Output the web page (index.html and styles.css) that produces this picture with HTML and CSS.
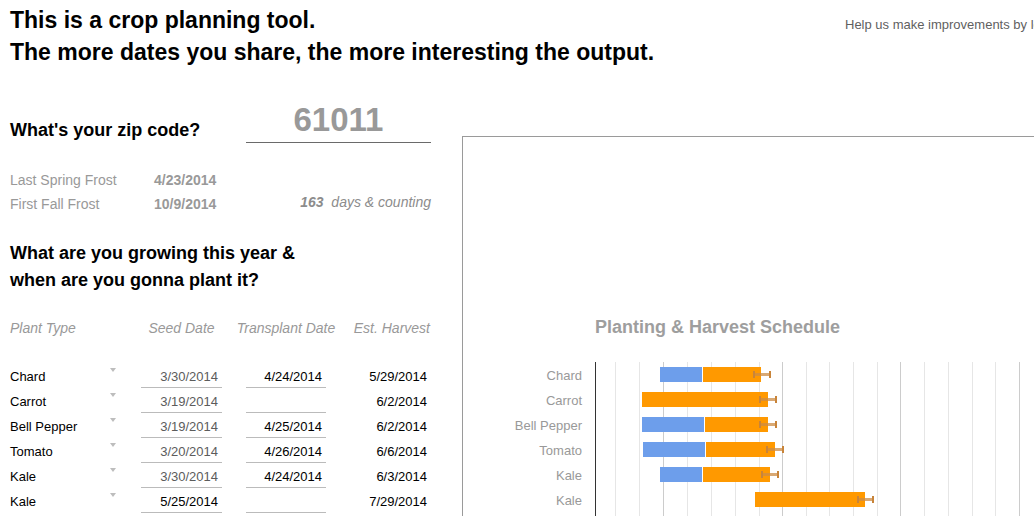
FILE: index.html
```html
<!DOCTYPE html>
<html>
<head>
<meta charset="utf-8">
<title>Crop planning tool</title>
<link rel="stylesheet" href="styles.css">
</head>
<body>
<div class="page">
  <header class="top">
    <div class="intro">
      <h1>This is a crop planning tool.</h1>
      <h1>The more dates you share, the more interesting the output.</h1>
    </div>
    <div class="help">Help us make improvements by letting us know what you think</div>
  </header>

  <div class="main">
    <section class="left">
      <div class="zip-row">
        <h2 class="q">What's your zip code?</h2>
        <div class="zip-value">61011</div>
      </div>

      <div class="frost">
        <span class="f-label">Last Spring Frost</span>
        <span class="f-date">4/23/2014</span>
        <span></span>
        <span class="f-label">First Fall Frost</span>
        <span class="f-date">10/9/2014</span>
        <span class="count"><b>163</b>&nbsp; days &amp; counting</span>
      </div>

      <h2 class="q q2">What are you growing this year &amp;<br>when are you gonna plant it?</h2>

      <div class="plants-head">
        <span>Plant Type</span>
        <span></span>
        <span class="c">Seed Date</span>
        <span></span>
        <span class="c">Transplant Date</span>
        <span class="r">Est. Harvest</span>
      </div>

      <div class="plant-row">
        <span class="name">Chard</span><span class="arrow-cell"><i class="arrow"></i></span>
        <span class="date seed">3/30/2014</span><span></span>
        <span class="date">4/24/2014</span><span class="harvest">5/29/2014</span>
      </div>
      <div class="plant-row">
        <span class="name">Carrot</span><span class="arrow-cell"><i class="arrow"></i></span>
        <span class="date seed">3/19/2014</span><span></span>
        <span class="date"></span><span class="harvest">6/2/2014</span>
      </div>
      <div class="plant-row">
        <span class="name">Bell Pepper</span><span class="arrow-cell"><i class="arrow"></i></span>
        <span class="date seed">3/19/2014</span><span></span>
        <span class="date">4/25/2014</span><span class="harvest">6/2/2014</span>
      </div>
      <div class="plant-row">
        <span class="name">Tomato</span><span class="arrow-cell"><i class="arrow"></i></span>
        <span class="date seed">3/20/2014</span><span></span>
        <span class="date">4/26/2014</span><span class="harvest">6/6/2014</span>
      </div>
      <div class="plant-row">
        <span class="name">Kale</span><span class="arrow-cell"><i class="arrow"></i></span>
        <span class="date seed">3/30/2014</span><span></span>
        <span class="date">4/24/2014</span><span class="harvest">6/3/2014</span>
      </div>
      <div class="plant-row">
        <span class="name">Kale</span><span class="arrow-cell"><i class="arrow"></i></span>
        <span class="date">5/25/2014</span><span></span>
        <span class="date"></span><span class="harvest">7/29/2014</span>
      </div>
    </section>

    <section class="chart">
      <div class="chart-title">Planting &amp; Harvest Schedule</div>
      <div class="chart-body">
        <div class="labels">
          <div>Chard</div>
          <div>Carrot</div>
          <div>Bell Pepper</div>
          <div>Tomato</div>
          <div>Kale</div>
          <div>Kale</div>
        </div>
        <div class="plot">
          <i class="gl" style="left:19px"></i>
          <i class="gl" style="left:43px"></i>
          <i class="gl major" style="left:67px"></i>
          <i class="gl" style="left:91px"></i>
          <i class="gl" style="left:115px"></i>
          <i class="gl" style="left:139px"></i>
          <i class="gl" style="left:163px"></i>
          <i class="gl major" style="left:186px"></i>
          <i class="gl" style="left:210px"></i>
          <i class="gl" style="left:233px"></i>
          <i class="gl" style="left:257px"></i>
          <i class="gl" style="left:281px"></i>
          <i class="gl major" style="left:304px"></i>
          <i class="gl" style="left:328px"></i>
          <i class="gl" style="left:352px"></i>
          <i class="gl" style="left:376px"></i>
          <i class="gl" style="left:399px"></i>
          <i class="gl major" style="left:423px"></i>

          <div class="bar-row">
            <i class="bar seed-bar" style="left:64px;width:42px"></i>
            <i class="bar grow-bar" style="left:107px;width:58px"></i>
            <i class="err" style="left:157px;width:18px"></i>
          </div>
          <div class="bar-row">
            <i class="bar grow-bar" style="left:46px;width:126px"></i>
            <i class="err" style="left:163px;width:18px"></i>
          </div>
          <div class="bar-row">
            <i class="bar seed-bar" style="left:46px;width:62px"></i>
            <i class="bar grow-bar" style="left:109px;width:63px"></i>
            <i class="err" style="left:163px;width:18px"></i>
          </div>
          <div class="bar-row">
            <i class="bar seed-bar" style="left:47px;width:62px"></i>
            <i class="bar grow-bar" style="left:110px;width:69px"></i>
            <i class="err" style="left:170px;width:18px"></i>
          </div>
          <div class="bar-row">
            <i class="bar seed-bar" style="left:64px;width:42px"></i>
            <i class="bar grow-bar" style="left:107px;width:67px"></i>
            <i class="err" style="left:165px;width:18px"></i>
          </div>
          <div class="bar-row">
            <i class="bar grow-bar" style="left:159px;width:110px"></i>
            <i class="err" style="left:261px;width:17px"></i>
          </div>
        </div>
      </div>
    </section>
  </div>
</div>
</body>
</html>
```

FILE: styles.css
```css
html, body {
  margin: 0;
  padding: 0;
  background: #fff;
  overflow: hidden;
}

body {
  font-family: "Liberation Sans", Arial, sans-serif;
  color: #000;
  width: 1034px;
  height: 516px;
}

.page {
  width: 1034px;
}

/* ---------- top ---------- */
.top {
  display: flex;
  align-items: flex-start;
}

.intro {
  flex: 0 0 845px;
  box-sizing: border-box;
  padding: 4px 0 0 10px;
}

.intro h1 {
  margin: 0;
  font-size: 23px;
  line-height: 32px;
  font-weight: bold;
  white-space: nowrap;
}

.help {
  padding-top: 17px;
  font-size: 13px;
  line-height: 16px;
  color: #5f5f5f;
  white-space: nowrap;
}

/* ---------- main ---------- */
.main {
  display: flex;
  align-items: flex-start;
}

.left {
  flex: 0 0 431px;
  box-sizing: border-box;
  padding-left: 10px;
}

.q {
  margin: 0;
  font-size: 18px;
  font-weight: bold;
  line-height: 20px;
}

.zip-row {
  margin-top: 33px;
  display: flex;
  justify-content: space-between;
  align-items: flex-end;
}

.zip-row .q {
  margin-bottom: 3px;
}

.zip-value {
  width: 185px;
  text-align: center;
  font-size: 33px;
  font-weight: bold;
  line-height: 38px;
  padding-bottom: 3px;
  color: #999;
  border-bottom: 1px solid #6a6a6a;
}

.frost {
  margin-top: 25px;
  display: grid;
  grid-template-columns: 144px 1fr auto;
  font-size: 14px;
  line-height: 24px;
  color: #999;
}

.f-date {
  font-weight: bold;
}

.count {
  font-style: italic;
  color: #8c8c8c;
  position: relative;
  top: -2px;
}

.count b {
  font-weight: bold;
}

.q2 {
  margin-top: 24px;
  line-height: 27px;
}

.plants-head,
.plant-row {
  display: grid;
  grid-template-columns: 100px 31px 81px 24px 80px 105px;
}

.plants-head {
  margin-top: 24px;
  margin-bottom: 25px;
  font-size: 14px;
  font-style: italic;
  line-height: 20px;
  color: #999;
}

.plants-head .c {
  display: flex;
  justify-content: center;
  white-space: nowrap;
}

.plants-head .r {
  text-align: right;
  padding-right: 1px;
  white-space: nowrap;
}

.plant-row {
  height: 25px;
  font-size: 13px;
  align-items: start;
}

.name {
  padding-top: 3px;
  line-height: 21px;
  white-space: nowrap;
}

.arrow-cell {
  padding-top: 5px;
  line-height: 0;
}

.arrow {
  display: inline-block;
  width: 0;
  height: 0;
  border-left: 3px solid transparent;
  border-right: 3px solid transparent;
  border-top: 4px solid #bdbdbd;
}

.date {
  height: 21px;
  padding: 3px 4px 0 0;
  line-height: 21px;
  text-align: right;
  border-bottom: 1px solid #bbb;
  color: #000;
}

.date.seed {
  color: #5c5c5c;
}

.harvest {
  padding: 3px 4px 0 0;
  line-height: 21px;
  text-align: right;
}

/* ---------- chart ---------- */
.chart {
  flex: 0 0 620px;
  height: 420px;
  margin-left: 31px;
  margin-top: 68px;
  border-top: 1px solid #9a9a9a;
  border-left: 1px solid #9a9a9a;
  padding-top: 178px;
  box-sizing: border-box;
}

.chart-title {
  padding-left: 132px;
  font-size: 18px;
  font-weight: bold;
  line-height: 24px;
  color: #9e9e9e;
  white-space: nowrap;
}

.chart-body {
  margin-top: 23px;
  display: grid;
  grid-template-columns: 120px 1fr;
  column-gap: 12px;
}

.labels div {
  height: 25px;
  padding-top: 1px;
  box-sizing: border-box;
  line-height: 25px;
  font-size: 13px;
  color: #999;
  text-align: right;
  padding-right: 1px;
  white-space: nowrap;
}

.plot {
  position: relative;
  height: 200px;
  border-left: 1px solid #333;
}

.gl {
  position: absolute;
  top: 0;
  bottom: 0;
  width: 1px;
  background: #e6e6e6;
}

.gl.major {
  background: #cccccc;
}

.bar-row {
  position: relative;
  height: 25px;
}

.bar {
  position: absolute;
  top: 5px;
  height: 15px;
}

.seed-bar {
  background: #6d9eeb;
}

.grow-bar {
  background: #ff9900;
}

.err {
  position: absolute;
  top: 11px;
  height: 3px;
  background: rgba(204, 140, 70, 0.75);
}

.err::before,
.err::after {
  content: "";
  position: absolute;
  top: -2px;
  width: 2px;
  height: 7px;
  background: #c8843a;
}

.err::before {
  left: 0;
}

.err::after {
  right: 0;
}
```
